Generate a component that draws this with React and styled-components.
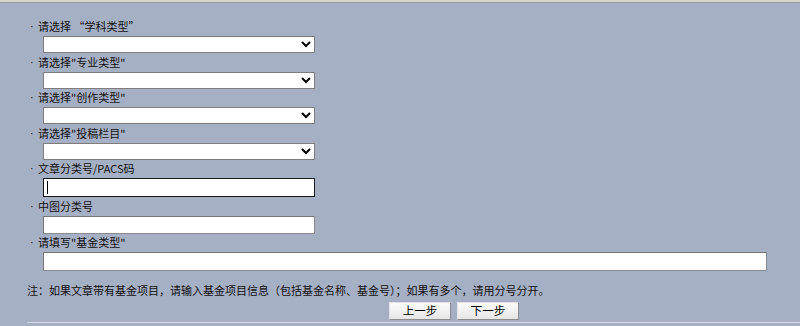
import React from "react";
import styled, { createGlobalStyle } from "styled-components";

const Global = createGlobalStyle`
  html, body { margin: 0; padding: 0; }
  body {
    background: #a6b0c4;
    font-family: "Noto Sans CJK SC", "Liberation Sans", sans-serif;
    font-size: 11px;
    color: #111;
    width: 800px;
    height: 326px;
    overflow: hidden;
  }
`;

const Page = styled.div`
  width: 800px;
  height: 326px;
  display: flex;
  flex-direction: column;
`;

const TopBar = styled.div`
  height: 2px;
  background: #d9d5cd;
  border-bottom: 1px solid #9c9a96;
  flex: none;
`;

const Form = styled.div`
  display: flex;
  flex-direction: column;
  padding: 14.5px 0 0 27px;
`;

const Label = styled.div`
  height: 18.5px;
  display: flex;
  align-items: center;
  padding-left: 3px;
  white-space: pre;
  line-height: 1;
`;

const Dot = styled.span`
  font-family: "Liberation Sans", sans-serif;
  font-size: 11px;
  width: 8px;
  flex: none;
  display: inline-block;
  overflow: hidden;
`;

const Control = styled.div`
  margin-left: 16px;
  position: relative;
  display: flex;
`;

const Select = styled.select`
  width: ${(p) => p.$w}px;
  height: 17px;
  box-sizing: border-box;
  border: 1px solid #7d7d7d;
  border-radius: 0;
  background: #fff;
  margin: 0;
  padding: 0 2px;
  font-size: 11px;
  font-family: inherit;
`;

const Input = styled.input`
  width: ${(p) => p.$w}px;
  height: ${(p) => p.$h || 18}px;
  box-sizing: border-box;
  border: 1px solid ${(p) => (p.$focused ? "#1a1a1a" : "#8a8a8a")};
  border-top-color: ${(p) => (p.$focused ? "#1a1a1a" : "#777")};
  border-left-color: ${(p) => (p.$focused ? "#1a1a1a" : "#777")};
  border-radius: 0;
  background: #fff;
  margin: 0;
  padding: 0 3px;
  outline: none;
  font-size: 11px;
  font-family: inherit;
`;

const Caret = styled.span`
  position: absolute;
  left: 4px;
  top: 3px;
  width: 1px;
  height: 13px;
  background: #000;
`;

const Note = styled.div`
  margin-top: 13px;
  line-height: 13px;
  height: 13px;
  white-space: nowrap;
`;

const Buttons = styled.div`
  display: flex;
  gap: 6px;
  margin: 5px 0 0 362px;
`;

const Button = styled.button`
  width: 62px;
  height: 18px;
  box-sizing: border-box;
  padding: 0;
  margin: 0;
  font-family: inherit;
  font-size: 11.5px;
  color: #000;
  line-height: 1;
  background: linear-gradient(#fbfbfb, #e6e6e6);
  border: 1px solid;
  border-color: #e2e2e2 #8c8c8c #8c8c8c #e2e2e2;
  border-radius: 0;
`;

const BottomLine = styled.div`
  margin: 2px 0 0 27px;
  border-top: 1px solid #d5d9e2;
`;

const selects = [
  "请选择 “学科类型”",
  '请选择"专业类型"',
  '请选择"创作类型"',
  '请选择"投稿栏目"',
];

export default function App() {
  return (
    <Page>
      <Global />
      <TopBar />
      <Form>
        {selects.map((s) => (
          <React.Fragment key={s}>
            <Label>
              <Dot>·</Dot>
              {s}
            </Label>
            <Control>
              <Select $w={272} defaultValue="">
                <option value=""></option>
              </Select>
            </Control>
          </React.Fragment>
        ))}
        <Label>
          <Dot>·</Dot>文章分类号/PACS码
        </Label>
        <Control>
          <Input $w={272} $h={19} $focused />
          <Caret />
        </Control>
        <Label>
          <Dot>·</Dot>中图分类号
        </Label>
        <Control>
          <Input $w={272} />
        </Control>
        <Label>
          <Dot>·</Dot>请填写"基金类型"
        </Label>
        <Control>
          <Input $w={724} $h={19} />
        </Control>
        <Note>
          注：如果文章带有基金项目，请输入基金项目信息（包括基金名称、基金号）；如果有多个，请用分号分开。
        </Note>
        <Buttons>
          <Button>上一步</Button>
          <Button>下一步</Button>
        </Buttons>
      </Form>
      <BottomLine />
    </Page>
  );
}
